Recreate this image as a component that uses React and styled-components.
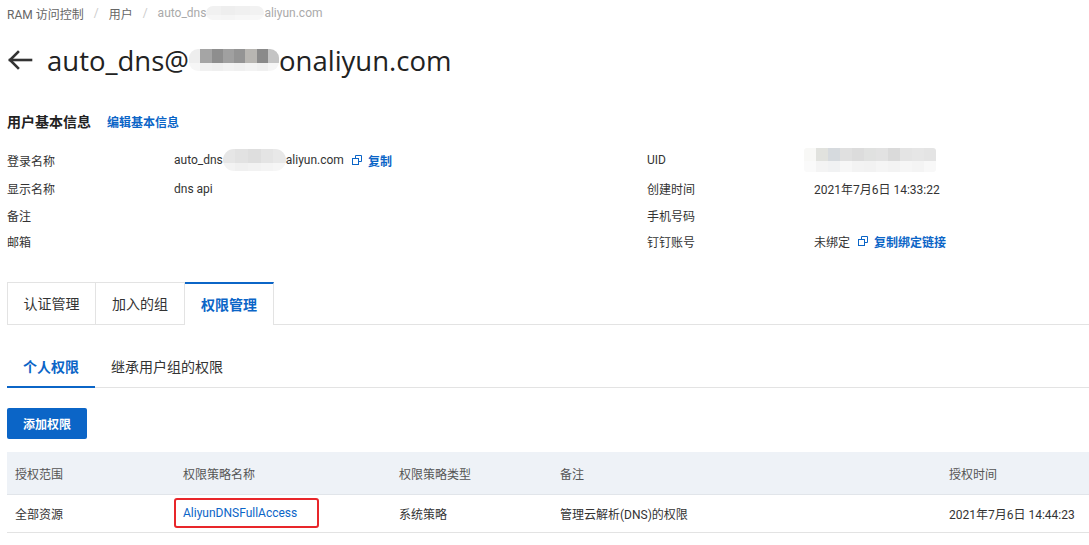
import React from 'react'
import styled, { createGlobalStyle } from 'styled-components'

const BLUE = '#0b65c7'
const FONT = 'Roboto, "Noto Sans", "Noto Sans CJK SC", sans-serif'

const GlobalStyle = createGlobalStyle`
  html, body {
    margin: 0;
    padding: 0;
    background: #fff;
  }
  body {
    font-family: ${FONT};
    color: #333;
    font-size: 12px;
  }
`

const Page = styled.div`
  width: 1089px;
  height: 545px;
  overflow: hidden;
  padding-left: 7px;
  box-sizing: border-box;
`

const Breadcrumb = styled.div`
  display: flex;
  align-items: center;
  height: 26px;
  font-size: 12px;
  color: #666;
`

const Crumb = styled.span`
  display: inline-flex;
  align-items: center;
  color: ${p => (p.$last ? '#aaa' : '#666')};
`

const Sep = styled.span`
  color: #ccc;
  margin: 0 10px;
`

const TitleRow = styled.div`
  display: flex;
  align-items: center;
  height: 68px;
`

const BackArrow = styled.svg`
  width: 26px;
  height: 20px;
  margin-right: 14px;
`

const Title = styled.h1`
  margin: 0;
  font-family: "Open Sans", "Noto Sans CJK SC", sans-serif;
  font-size: 27.5px;
  font-weight: 500;
  color: #222;
  display: flex;
  align-items: center;
`

const Mosaic = styled.span`
  display: inline-flex;
  flex-direction: column;
  width: ${p => p.$w}px;
  height: ${p => p.$h}px;
  border-radius: ${p => p.$r || 0}px;
  overflow: hidden;
  vertical-align: middle;
`

const MosaicRow = styled.span`
  display: flex;
  flex: ${p => p.$flex};
`

const Cell = styled.span`
  flex: 1;
`

const SectionHead = styled.div`
  display: flex;
  align-items: baseline;
  margin-top: 17px;
  height: 28px;
`

const SectionTitle = styled.span`
  font-size: 14px;
  font-weight: 700;
  color: #222;
  margin-right: 16px;
`

const LinkText = styled.span`
  color: ${BLUE};
  font-weight: ${p => (p.$bold ? 700 : 400)};
  font-size: 12px;
`

const InfoGrid = styled.div`
  display: grid;
  grid-template-columns: 167px 473px 167px 1fr;
  grid-template-rows: 30px 27px 26px 26px;
  margin-top: 6px;
  align-items: center;
`

const Label = styled.div`
  color: #333;
`

const Value = styled.div`
  display: flex;
  align-items: center;
  color: #333;
`

const CopyLink = styled.span`
  display: inline-flex;
  align-items: center;
  margin-left: 8px;
  gap: 6px;
`

const Tabs = styled.div`
  display: flex;
  margin-top: 28px;
  border-bottom: 1px solid #e3e3e3;
  height: 42px;
`

const Tab = styled.div`
  width: 89px;
  box-sizing: border-box;
  display: flex;
  align-items: center;
  justify-content: center;
  padding-bottom: 2px;
  font-size: 14px;
  border: 1px solid #e3e3e3;
  border-left-width: ${p => (p.$first ? 1 : 0)}px;
  border-top: ${p => (p.$active ? `2px solid ${BLUE}` : '1px solid #e3e3e3')};
  border-bottom: none;
  background: #fff;
  color: ${p => (p.$active ? BLUE : '#333')};
  font-weight: ${p => (p.$active ? 700 : 400)};
  height: ${p => (p.$active ? 43 : 42)}px;
  margin-bottom: ${p => (p.$active ? -1 : 0)}px;
`

const SubTabs = styled.div`
  display: flex;
  margin-top: 21px;
  border-bottom: 1px solid #e3e3e3;
  height: 41px;
`

const SubTab = styled.div`
  display: flex;
  align-items: center;
  padding: 0 16px 1px;
  font-size: 14px;
  color: ${p => (p.$active ? BLUE : '#333')};
  font-weight: ${p => (p.$active ? 700 : 400)};
  border-bottom: 2px solid ${p => (p.$active ? BLUE : 'transparent')};
  margin-bottom: -1px;
`

const Button = styled.button`
  display: block;
  margin-top: 20px;
  width: 80px;
  height: 31px;
  border: none;
  border-radius: 2px;
  background: ${BLUE};
  color: #fff;
  font-family: ${FONT};
  font-size: 12px;
  font-weight: 700;
  padding: 0;
`

const Table = styled.div`
  margin-top: 13px;
  display: grid;
  grid-template-columns: 167px 216px 161px 389px 1fr;
`

const Th = styled.div`
  height: 42px;
  display: flex;
  align-items: center;
  padding-left: ${p => p.$pl ?? 8}px;
  background: #eef2f7;
  border-bottom: 1px solid #e1e5ea;
  color: #555;
`

const Td = styled.div`
  height: 38px;
  display: flex;
  align-items: center;
  padding-left: ${p => p.$pl ?? 8}px;
  padding-bottom: 1px;
  box-sizing: border-box;
  border-bottom: 1px solid #e3e3e3;
  color: #333;
`

const Marked = styled.span`
  display: inline-flex;
  align-items: center;
  box-sizing: border-box;
  width: 145px;
  height: 30px;
  padding-left: 7px;
  border: 2px solid #e8262a;
  border-radius: 3px;
  color: ${BLUE};
`

function Pixelated({ w, h, r, top, bottom, split = 0.62 }) {
  return (
    <Mosaic $w={w} $h={h} $r={r}>
      <MosaicRow $flex={split}>
        {top.map((c, i) => <Cell key={i} style={{ background: c }} />)}
      </MosaicRow>
      <MosaicRow $flex={1 - split}>
        {bottom.map((c, i) => <Cell key={i} style={{ background: c }} />)}
      </MosaicRow>
    </Mosaic>
  )
}

function CopyIcon() {
  return (
    <svg width="10" height="10" viewBox="0 0 10 10" fill="none" stroke={BLUE} strokeWidth="1">
      <rect x="0.5" y="3.5" width="6" height="6" />
      <path d="M3.5 3.5V0.5H9.5V6.5H6.5" />
    </svg>
  )
}

const infoLeft = [
  ['登录名称', 'login'],
  ['显示名称', 'dns api'],
  ['备注', ''],
  ['邮箱', ''],
]

const infoRight = [
  ['UID', 'uid'],
  ['创建时间', '2021年7月6日 14:33:22'],
  ['手机号码', ''],
  ['钉钉账号', 'ding'],
]

function renderValue(v) {
  if (v === 'login') {
    return (
      <Value>
        auto_dns
        <Pixelated w={63} h={22} r={11}
          top={['#e6e6e6', '#e2e2e2', '#dedede', '#e4e4e4', '#e8e8e8']}
          bottom={['#f3f3f3', '#f0f0f0', '#f2f2f2', '#f4f4f4', '#f6f6f6']} />
        aliyun.com
        <CopyLink><CopyIcon /><LinkText $bold>复制</LinkText></CopyLink>
      </Value>
    )
  }
  if (v === 'uid') {
    return (
      <Value style={{ marginLeft: -10 }}>
        <Pixelated w={132} h={24} r={3} split={0.55}
          top={['#f8f8f6', '#e1e2de', '#d6dade', '#e0e0e0', '#dcdcdc', '#e0e1e0', '#e2e2e2', '#dadada', '#e4e4e4', '#e6e6e6', '#e4e4e4']}
          bottom={['#fafafa', '#f4f4f4', '#f1f2f3', '#f7f7f7', '#f3f3f3', '#f2f2f2', '#f5f5f5', '#f3f3f3', '#f6f6f6', '#f4f4f4', '#f8f8f8']} />
      </Value>
    )
  }
  if (v === 'ding') {
    return (
      <Value>
        未绑定
        <CopyLink><CopyIcon /><LinkText $bold>复制绑定链接</LinkText></CopyLink>
      </Value>
    )
  }
  return <Value>{v}</Value>
}

export default function App() {
  return (
    <Page>
      <GlobalStyle />
      <Breadcrumb>
        <Crumb>RAM 访问控制</Crumb>
        <Sep>/</Sep>
        <Crumb>用户</Crumb>
        <Sep>/</Sep>
        <Crumb $last>
          auto_dns
          <Pixelated w={58} h={14} r={7}
            top={['#f1f1f1', '#eeeeee', '#f0f0f0', '#f2f2f2']}
            bottom={['#f6f6f6', '#f5f5f5', '#f7f7f7', '#f8f8f8']} />
          aliyun.com
        </Crumb>
      </Breadcrumb>

      <TitleRow>
        <BackArrow viewBox="0 0 26 20" fill="none" stroke="#333" strokeWidth="2.6" strokeLinecap="square">
          <path d="M11 2L3 10L11 18" />
          <path d="M3 10H24" />
        </BackArrow>
        <Title>
          auto_dns@
          <Pixelated w={90} h={22} r={9}
            top={['#eeeeee', '#a5a5a5', '#8e8e8e', '#a0a0a0', '#949494', '#b8b6b2', '#8a8a8a', '#c4c4c4']}
            bottom={['#f6f6f6', '#f1f1f1', '#efefef', '#f2f2f2', '#f0f0f0', '#f3f3f3', '#f0f0f0', '#f6f6f6']} />
          onaliyun.com
        </Title>
      </TitleRow>

      <SectionHead>
        <SectionTitle>用户基本信息</SectionTitle>
        <LinkText $bold>编辑基本信息</LinkText>
      </SectionHead>

      <InfoGrid>
        {infoLeft.map(([label, v], i) => (
          <React.Fragment key={label}>
            <Label>{label}</Label>
            {renderValue(v)}
            <Label>{infoRight[i][0]}</Label>
            {renderValue(infoRight[i][1])}
          </React.Fragment>
        ))}
      </InfoGrid>

      <Tabs>
        <Tab $first>认证管理</Tab>
        <Tab>加入的组</Tab>
        <Tab $active>权限管理</Tab>
      </Tabs>

      <SubTabs>
        <SubTab $active>个人权限</SubTab>
        <SubTab>继承用户组的权限</SubTab>
      </SubTabs>

      <Button>添加权限</Button>

      <Table>
        <Th>授权范围</Th>
        <Th $pl={9}>权限策略名称</Th>
        <Th $pl={9}>权限策略类型</Th>
        <Th $pl={9}>备注</Th>
        <Th $pl={9}>授权时间</Th>
        <Td>全部资源</Td>
        <Td $pl={0}><Marked>AliyunDNSFullAccess</Marked></Td>
        <Td $pl={9}>系统策略</Td>
        <Td $pl={9}>管理云解析(DNS)的权限</Td>
        <Td $pl={9}>2021年7月6日 14:44:23</Td>
      </Table>
    </Page>
  )
}
